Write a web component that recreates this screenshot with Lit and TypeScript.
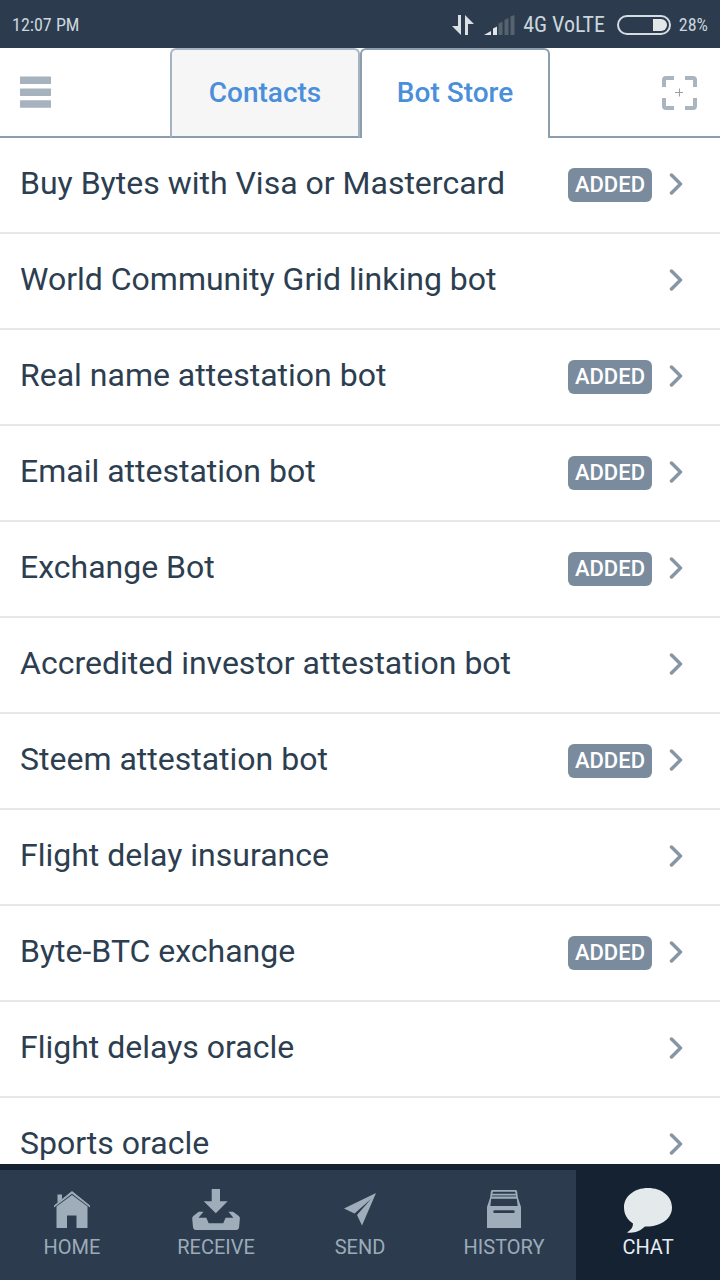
import { LitElement, html, css, svg } from "lit";
import { customElement, property, state } from "lit/decorators.js";
import { classMap } from "lit/directives/class-map.js";

@customElement("status-bar")
class StatusBar extends LitElement {
  static styles = css`
    :host {
      display: flex;
      align-items: center;
      justify-content: space-between;
      flex: none;
      height: 48px;
      padding: 2px 12px 0;
      box-sizing: border-box;
      background: #2c3c4e;
      color: #cbd6de;
      font: 18px/24px "Liberation Sans Narrow", "Roboto Condensed", Roboto, sans-serif;
    }
    .right {
      display: flex;
      align-items: center;
    }
    .network {
      font-size: 22px;
    }
    svg {
      display: block;
    }
    .signal {
      margin: 0 8px 0 10px;
    }
    .battery {
      margin: 0 8px 0 12px;
    }
  `;

  render() {
    return html`
      <span>12:07 PM</span>
      <div class="right">
        <svg width="22" height="20" viewBox="0 0 22 20" fill="#d8e0e4">
          <path d="M6 0h3v20L0 11h6zM13 0l9 9h-6v11h-3z" />
        </svg>
        <svg class="signal" width="31" height="20" viewBox="0 0 31 20">
          <path fill="#dfe5e8" d="M0 20l7-4v4zM9 13.500l4-2v8.500h-4z" />
          <path fill="#55636f" d="M14.500 8.500l4-2v13.500h-4zM20.500 5l4-2v17h-4zM26.500 1.500l4-1.500v20h-4z" />
        </svg>
        <span class="network">4G VoLTE</span>
        <svg class="battery" width="54" height="20" viewBox="0 0 54 20">
          <rect x="1" y="1" width="52" height="18" rx="9" fill="none" stroke="#d3dde2" stroke-width="2" />
          <path fill="#e3e7e8" d="M36 4h8a6 6 0 0 1 0 12h-8z" />
        </svg>
        <span>28%</span>
      </div>
    `;
  }
}

@customElement("app-header")
class AppHeader extends LitElement {
  @state() private tab = "Bot Store";

  static styles = css`
    :host {
      display: grid;
      grid-template-columns: 1fr 190px 190px 1fr;
      flex: none;
      height: 90px;
      background: #fff;
    }
    button {
      margin: 0;
      border: 0;
      background: none;
      font: inherit;
      cursor: pointer;
    }
    .side {
      display: flex;
      align-items: center;
      border-bottom: 2px solid #8c9dae;
    }
    .side.end {
      justify-content: flex-end;
    }
    .icon {
      display: flex;
      padding: 0 20px;
    }
    .end .icon {
      padding: 0 23px;
    }
    .tab {
      border: 2px solid #a5b4c2;
      border-bottom-color: #8c9dae;
      border-radius: 6px 6px 0 0;
      background: #f6f6f6;
      color: #4a8fdc;
      font-size: 28px;
      line-height: 36px;
      font-weight: 500;
      padding: 0;
    }
    .tab.on {
      background: #fff;
      border-color: #8c9dae;
      border-bottom: 0;
      padding-bottom: 2px;
    }
  `;

  render() {
    return html`
      <div class="side">
        <button class="icon" aria-label="Menu">
          <svg width="31" height="32" viewBox="0 0 31 32" fill="#a6b3bf">
            <rect y="0.500" width="31" height="7.500" rx="0.500" />
            <rect y="12.500" width="31" height="7.500" rx="0.500" />
            <rect y="24.300" width="31" height="7.500" rx="0.500" />
          </svg>
        </button>
      </div>
      ${["Contacts", "Bot Store"].map(
        (t) => html`<button
          class=${classMap({ tab: true, on: t === this.tab })}
          @click=${() => (this.tab = t)}
        >${t}</button>`
      )}
      <div class="side end">
        <button class="icon" aria-label="Scan">
          <svg width="35" height="36" viewBox="0 -2 35 36" fill="none">
            <path
              stroke="#abb5bf"
              stroke-width="4"
              d="M2 11V4q0-2 2-2h8M23 2h8q2 0 2 2v7M33 22v8q0 2-2 2h-8M12 32H4q-2 0-2-2v-8"
            />
            <path stroke="#9a9fa4" stroke-width="1" d="M13 16.500h8M17.500 12.500v8" />
          </svg>
        </button>
      </div>
    `;
  }
}

@customElement("bot-row")
class BotRow extends LitElement {
  @property() name = "";
  @property({ type: Boolean }) added = false;

  static styles = css`
    :host {
      display: block;
      border-bottom: 2px solid #e6e7e9;
    }
    a {
      display: flex;
      align-items: center;
      height: 94px;
      padding: 0 36px 0 20px;
      box-sizing: border-box;
      color: #2c3e50;
      text-decoration: none;
    }
    .name {
      flex: 1;
      font-size: 32px;
      line-height: 40px;
      padding-bottom: 4px;
    }
    .badge {
      margin-right: 16px;
      padding: 0 7px;
      border-radius: 6px;
      background: #7a8b9d;
      color: #fff;
      font-size: 22px;
      line-height: 34px;
      font-weight: 500;
    }
  `;

  render() {
    return html`
      <a href="#">
        <span class="name">${this.name}</span>
        ${this.added ? html`<span class="badge">ADDED</span>` : ""}
        <svg width="16" height="24" viewBox="0 0 16 24" fill="none" stroke="#8796a3" stroke-width="3.500" stroke-linecap="round" stroke-linejoin="round">
          <path d="M3.500 2l9 9-9 9" />
        </svg>
      </a>
    `;
  }
}

const icons = {
  home: svg`<path d="M3.500 11.500V3.500h4.500v4.500zM18 0l18 14.500v2L18 2.800 0 16.500v-2zM2.500 15.500L18 4l15.500 11.500V37H22.500V24.500H13V37H2.500z"/>`,
  receive: svg`<path d="M19.700 0H28v12.300h7.700L23.800 24.300 11.700 12.300h8zM6.700 22.700h4.800l-5 6h7.800l2.400 5.500h14.500l2.400-5.500h7.800l-5-6H41l5.800 4.300q1.200 1 1.100 2.500l-.8 8.500q-.3 3-3 3H4q-2.700 0-3-3L.2 29.500Q.1 28 1.300 27z"/>`,
  send: svg`<path d="M32 0L0 15.500l10.500 5L27 6 13 22l5 10.500z"/>`,
  history: svg`<path fill-rule="evenodd" d="M5 0h24l1 1 1 7 3 9v21H0V17l3-9 1-7zM5.800 1.700L5.500 3.800h23l-.3-2.100zM5 5.600l-.2.900h24.400l-.2-.9zM4.200 8.800L3.300 16h27.400l-.9-7.200zM7.600 20.300a1.300 1.300 0 0 0 0 2.700h18.800a1.300 1.300 0 0 0 0-2.700z"/>`,
  chat: svg`<path transform="translate(0 3)" d="M24 0c14 0 24 8.500 24 19.500S37 39 21 38.500C16 43 11 45.500 3 44.500c4-2.500 6-5 6-9C3.500 32 0 26.500 0 19.500 0 8.500 10 0 24 0z"/>`,
};

@customElement("tab-bar")
class TabBar extends LitElement {
  @state() private current = "CHAT";

  private items = [
    { label: "HOME", icon: icons.home, w: 36, h: 37 },
    { label: "RECEIVE", icon: icons.receive, w: 48, h: 41 },
    { label: "SEND", icon: icons.send, w: 32, h: 33 },
    { label: "HISTORY", icon: icons.history, w: 34, h: 38 },
    { label: "CHAT", icon: icons.chat, w: 48, h: 48 },
  ];

  static styles = css`
    :host {
      display: grid;
      grid-template-columns: repeat(5, 1fr);
      flex: none;
      border-top: 6px solid #142231;
      background: #2c3c4e;
    }
    button {
      display: flex;
      flex-direction: column;
      align-items: center;
      height: 110px;
      margin: 0;
      padding: 16px 0 0;
      border: 0;
      background: none;
      color: #9babb9;
      fill: #9fadba;
      font: 20px/30px Roboto, sans-serif;
      cursor: pointer;
    }
    .on {
      background: #142231;
      color: #e6edf3;
      fill: #e4e9ec;
    }
    .art {
      display: flex;
      align-items: center;
      justify-content: center;
      height: 46px;
    }
  `;

  render() {
    return this.items.map(
      (i) => html`<button
        class=${classMap({ on: i.label === this.current })}
        @click=${() => (this.current = i.label)}
      >
        <span class="art">
          <svg width=${i.w} height=${i.h} viewBox="0 0 ${i.w} ${i.h}">${i.icon}</svg>
        </span>
        <span>${i.label}</span>
      </button>`
    );
  }
}

@customElement("app-root")
class AppRoot extends LitElement {
  private bots = [
    { name: "Buy Bytes with Visa or Mastercard", added: true },
    { name: "World Community Grid linking bot", added: false },
    { name: "Real name attestation bot", added: true },
    { name: "Email attestation bot", added: true },
    { name: "Exchange Bot", added: true },
    { name: "Accredited investor attestation bot", added: false },
    { name: "Steem attestation bot", added: true },
    { name: "Flight delay insurance", added: false },
    { name: "Byte-BTC exchange", added: true },
    { name: "Flight delays oracle", added: false },
    { name: "Sports oracle", added: false },
  ];

  static styles = css`
    :host {
      display: flex;
      flex-direction: column;
      height: 100vh;
      background: #fff;
      font-family: Roboto, sans-serif;
    }
    main {
      flex: 1;
      min-height: 0;
      overflow: hidden;
    }
  `;

  render() {
    return html`
      <status-bar></status-bar>
      <app-header></app-header>
      <main>
        ${this.bots.map((b) => html`<bot-row .name=${b.name} .added=${b.added}></bot-row>`)}
      </main>
      <tab-bar></tab-bar>
    `;
  }
}
